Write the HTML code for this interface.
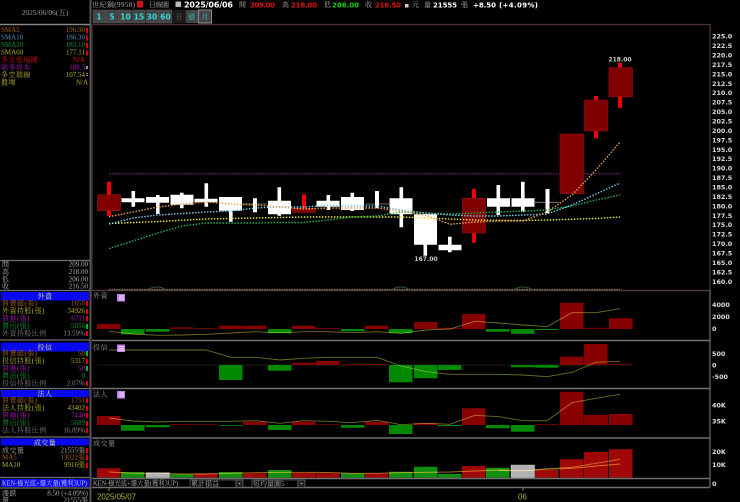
<!DOCTYPE html>
<html><head><meta charset="utf-8"><style>
html,body{margin:0;padding:0;background:#000;width:740px;height:502px;overflow:hidden}
svg{display:block;filter:blur(.3px)}
text{font-family:"Liberation Serif","Noto Serif CJK TC",serif;font-size:7px;fill:#aaa}
.e{text-anchor:end}.m{text-anchor:middle}
.t{letter-spacing:.45px}
.b{font-family:"DejaVu Sans",sans-serif;font-weight:bold;font-size:7px;fill:#fff}
.s{font-family:"DejaVu Sans",sans-serif;font-weight:bold;font-size:6.4px;fill:#ddd}
.w{font-family:"DejaVu Sans",sans-serif;font-weight:bold;font-size:6px;fill:#ccc}
.btn{font-family:"DejaVu Sans",sans-serif;font-weight:bold;font-size:7.5px;fill:#30d8d8;text-anchor:middle}
.l{fill:none;stroke:#6e6e22;stroke-width:.9;mix-blend-mode:screen}
.d{fill:none;stroke-width:1.4;stroke-dasharray:1.5 1.5}
</style></head><body>
<svg width="740" height="502" viewBox="0 0 740 502" xmlns="http://www.w3.org/2000/svg">
<rect width="740" height="502" fill="#000"/>

<!-- frame -->
<path d="M90.500 0V502" stroke="#5a5058" stroke-width="2"/>
<path d="M0 24.500H90" stroke="#888" stroke-width="1.500"/>
<path d="M92 24.500H710V487" fill="none" stroke="#4a303c" stroke-width="1.300"/>
<path d="M92 24V290" stroke="#3a2a36" stroke-width="1.500"/>
<path d="M92 290.500H710" stroke="#4a3a3c" stroke-width="1.500"/>
<path d="M92 340.500H710M92 388.500H710M92 438H710M92 487.500H710" stroke="#707070" stroke-width="1.400"/>
<path d="M710 290V487" stroke="#707070" stroke-width="1"/>
<path d="M0 260.500H90M0 290.500H90M0 340H90M0 388.500H90M0 437H90M0 477.500H90M0 488H90" stroke="#707070" stroke-width="1.300"/>

<!-- left top -->
<text x="45" y="15" class="m" style="font-size:7.500px;fill:#999">2025/06/06(五)</text>
<text x="1" y="32" style="fill:#a86018">SMA5</text><text x="85" y="32" class="e" style="fill:#a86018">196.90</text>
<text x="1" y="39.500" style="fill:#5090b8">SMA10</text><text x="85" y="39.500" class="e" style="fill:#5090b8">186.30</text>
<text x="1" y="47" style="fill:#109038">SMA20</text><text x="85" y="47" class="e" style="fill:#109038">183.10</text>
<text x="1" y="54.500" style="fill:#b0b028">SMA60</text><text x="85" y="54.500" class="e" style="fill:#b0b028">177.11</text>
<text x="1" y="62" class="t" style="fill:#d01010">多方逃場圖</text><text x="85" y="62" class="e" style="fill:#d01010">N/A</text>
<text x="1" y="69.500" class="t" style="fill:#a818b8">做多成本</text><text x="85" y="69.500" class="e" style="fill:#a818b8">188.5</text>
<text x="1" y="77" class="t" style="fill:#b0b028">多空瑞線</text><text x="85" y="77" class="e" style="fill:#b0b028">107.54</text>
<text x="1" y="84.500" class="t" style="fill:#b0b028">盤場</text><text x="88" y="84.500" class="e" style="fill:#b0b028">N/A</text>
<path d="M86 28h2v5h-2zM86 35.500h2v5h-2zM86 43h2v5h-2zM86 50.500h2v5h-2z" fill="#e00000"/>
<path d="M86 66h2v3h-2zM86 73h2v1h-2zM86 75h2v1h-2z" fill="#999"/>

<!-- OHLC -->
<text x="2" y="266.500" style="fill:#aaa">開</text><text x="88" y="266.500" class="e" style="fill:#aaa">209.00</text>
<text x="2" y="274" style="fill:#aaa">高</text><text x="88" y="274" class="e" style="fill:#aaa">218.00</text>
<text x="2" y="281.500" style="fill:#aaa">低</text><text x="88" y="281.500" class="e" style="fill:#aaa">206.00</text>
<text x="2" y="288.500" style="fill:#aaa">收</text><text x="88" y="288.500" class="e" style="fill:#aaa">216.50</text>

<!-- side blocks -->
<path d="M1 292h88v8.500H1zM1 342.500h88v9H1zM1 390h88v7H1zM1 438.500h88v7H1zM1 479h88v8H1z" fill="#0808f0"/>
<text x="45" y="298.500" class="m t" style="fill:#e0e090">外資</text>
<text x="45" y="349.500" class="m t" style="fill:#e0e090">投信</text>
<text x="45" y="396" class="m t" style="fill:#e0e090">法人</text>
<text x="45" y="445" class="m t" style="fill:#e0e090">成交量</text>
<text x="2" y="485.500" style="fill:#c8c8ff" textLength="85" lengthAdjust="spacingAndGlyphs">KEN-極光底+爆大量(獲利3UP)</text>

<text x="2" y="305.500" class="t" style="fill:#a86018">買賣超(張)</text><text x="85" y="305.500" class="e" style="fill:#a86018">1655</text>
<text x="2" y="313" class="t" style="fill:#b0b028">外資持股(張)</text><text x="85" y="313" class="e" style="fill:#b0b028">34926</text>
<text x="2" y="320.500" class="t" style="fill:#a818b8">買進(張)</text><text x="85" y="320.500" class="e" style="fill:#a818b8">6711</text>
<text x="2" y="328" class="t" style="fill:#109038">賣出(張)</text><text x="85" y="328" class="e" style="fill:#109038">5056</text>
<text x="2" y="335.500" class="t" style="fill:#777">外資持股比例</text><text x="85" y="335.500" class="e" style="fill:#888">13.59%</text>

<text x="2" y="355.500" class="t" style="fill:#a86018">買賣超(張)</text><text x="85" y="355.500" class="e" style="fill:#a86018">50</text>
<text x="2" y="363" class="t" style="fill:#b0b028">投信持股(張)</text><text x="85" y="363" class="e" style="fill:#b0b028">5317</text>
<text x="2" y="370.500" class="t" style="fill:#a818b8">買進(張)</text><text x="85" y="370.500" class="e" style="fill:#a818b8">50</text>
<text x="2" y="378" class="t" style="fill:#109038">賣出(張)</text><text x="85" y="378" class="e" style="fill:#109038">0</text>
<text x="2" y="385.500" class="t" style="fill:#777">投信持股比例</text><text x="85" y="385.500" class="e" style="fill:#888">2.07%</text>

<text x="2" y="402.500" class="t" style="fill:#a86018">買賣超(張)</text><text x="85" y="402.500" class="e" style="fill:#a86018">1751</text>
<text x="2" y="410" class="t" style="fill:#b0b028">法人持股(張)</text><text x="85" y="410" class="e" style="fill:#b0b028">43402</text>
<text x="2" y="417.500" class="t" style="fill:#a818b8">買進(張)</text><text x="85" y="417.500" class="e" style="fill:#a818b8">7440</text>
<text x="2" y="425" class="t" style="fill:#109038">賣出(張)</text><text x="85" y="425" class="e" style="fill:#109038">5689</text>
<text x="2" y="432.500" class="t" style="fill:#777">法人持股比例</text><text x="85" y="432.500" class="e" style="fill:#888">16.89%</text>

<text x="2" y="452.500" class="t" style="fill:#aaa">成交量</text><text x="85" y="452.500" class="e" style="fill:#aaa">21555張</text>
<text x="2" y="459.500" style="fill:#a86018">MA5</text><text x="85" y="459.500" class="e" style="fill:#a86018">13022張</text>
<text x="2" y="467" style="fill:#b0b028">MA10</text><text x="85" y="467" class="e" style="fill:#b0b028">9916張</text>

<text x="2" y="495.500" class="t" style="fill:#aaa">漲跌</text><text x="88" y="495.500" class="e" style="fill:#aaa">8.50 (+4.09%)</text>
<text x="2" y="502.500" style="fill:#aaa">量</text><text x="88" y="502.500" class="e" style="fill:#aaa">21555張</text>

<path d="M86 301h2v5h-2zM86 309h2v5h-2zM86 316h2v5h-2zM86 331h2v5h-2zM86 359h2v5h-2zM86 381h2v5h-2zM86 398h2v5h-2zM86 406h2v5h-2zM86 413h2v5h-2zM86 421h2v5h-2zM86 428h2v5h-2zM86 448h2v5h-2zM86 455h2v5h-2zM86 463h2v5h-2z" fill="#e00000"/>
<path d="M86 324h2v5h-2zM86 351h2v5h-2zM86 366h2v5h-2z" fill="#00c000"/>

<!-- header -->
<text x="92" y="7" style="fill:#aaa" textLength="43">世紀鋼(9958)</text>
<rect x="137" y="1" width="6" height="6.500" fill="#d01018"/>
<text x="149" y="7" style="fill:#aaa" textLength="20">日線圖</text>
<rect x="175.500" y="1.500" width="5.500" height="5.500" fill="#bbb"/>
<text x="184" y="7.500" class="b" style="font-size:8px" textLength="49">2025/06/06</text>
<text x="239" y="7" style="fill:#aaa">開</text>
<text x="250" y="7.500" class="b" style="fill:#e01010" textLength="25">209.00</text>
<text x="282" y="7" style="fill:#aaa">高</text>
<text x="291" y="7.500" class="b" style="fill:#e01010" textLength="26">218.00</text>
<text x="324" y="7" style="fill:#aaa">低</text>
<text x="332" y="7.500" class="b" style="fill:#10d010" textLength="27">206.00</text>
<text x="365" y="7" style="fill:#aaa">收</text>
<text x="375" y="7.500" class="b" style="fill:#e01010" textLength="26">216.50</text>
<rect x="405" y="4" width="3.500" height="3.500" fill="#ccc"/>
<text x="412" y="7" style="fill:#aaa">元</text>
<text x="424" y="7" style="fill:#aaa">量</text>
<text x="433" y="7.500" class="b" textLength="24">21555</text>
<text x="461" y="7" style="fill:#aaa">張</text>
<text x="473" y="7.500" class="b" textLength="23">+8.50</text>
<text x="499" y="7.500" class="b" textLength="39">(+4.09%)</text>

<!-- buttons -->
<path d="M93 10h12.500v13H93zM106 10h12.500v13H106zM119 10h12.500v13H119zM132.500 10h12.500v13H132.500zM146 10h12.500v13H146zM159 10h13v13H159z" fill="#444" stroke="#5c5c5c" stroke-width=".5"/>
<rect x="173" y="10" width="12" height="13" fill="#1a1a1a"/>
<rect x="185.500" y="10" width="12.500" height="13" fill="#444"/>
<rect x="198.500" y="10" width="13" height="13" fill="#444" stroke="#aaa" stroke-width=".8"/>
<text x="99" y="19.500" class="btn">1</text><text x="112" y="19.500" class="btn">5</text><text x="125.500" y="19.500" class="btn">10</text><text x="139" y="19.500" class="btn">15</text><text x="152" y="19.500" class="btn">30</text><text x="165.500" y="19.500" class="btn">60</text>
<text x="179" y="19" class="m" style="fill:#666">日</text><text x="191.500" y="19" class="m" style="fill:#30c0c0">週</text><text x="205" y="19" class="m" style="fill:#30c0c0">月</text>

<!-- price scale -->
<text class="s" x="712" y="38.500">225.0</text><text class="s" x="712" y="48">222.5</text><text class="s" x="712" y="57.500">220.0</text><text class="s" x="712" y="67">217.5</text><text class="s" x="712" y="76.500">215.0</text><text class="s" x="712" y="86">212.5</text><text class="s" x="712" y="95">210.0</text><text class="s" x="712" y="104.500">207.5</text><text class="s" x="712" y="114">205.0</text><text class="s" x="712" y="123.500">202.5</text><text class="s" x="712" y="133">200.0</text><text class="s" x="712" y="142.500">197.5</text><text class="s" x="712" y="152">195.0</text><text class="s" x="712" y="161">192.5</text><text class="s" x="712" y="170.500">190.0</text><text class="s" x="712" y="180">187.5</text><text class="s" x="712" y="189.500">185.0</text><text class="s" x="712" y="199">182.5</text><text class="s" x="712" y="208.500">180.0</text><text class="s" x="712" y="218">177.5</text><text class="s" x="712" y="227">175.0</text><text class="s" x="712" y="236.500">172.5</text><text class="s" x="712" y="246">170.0</text><text class="s" x="712" y="255.500">167.5</text><text class="s" x="712" y="265">165.0</text><text class="s" x="712" y="274.500">162.5</text><text class="s" x="712" y="284">160.0</text>
<text class="s" x="712" y="307">4000</text><text class="s" x="712" y="319">2000</text><text class="s" x="712" y="331">0</text>
<text class="s" x="712" y="356">500</text><text class="s" x="712" y="367.500">0</text><text class="s" x="712" y="379">-500</text>
<text class="s" x="712" y="407.500">40K</text><text class="s" x="712" y="423.500">35K</text>
<text class="s" x="712" y="454">20K</text><text class="s" x="712" y="467">10K</text><text class="s" x="712" y="486">0</text>

<!-- purple line -->
<path d="M109 173.700H620" stroke="#501858" stroke-width="1.400" stroke-dasharray="2 1"/>
<path d="M109 289.500H620" stroke="#8a7a58" stroke-width="1.200" stroke-dasharray="1.500 1"/>
<path d="M148 289.500q9-5 18 0M392 289.500q9-5 18 0M514 289.500q9-5 18 0" fill="none" stroke="#2c5a2c" stroke-width="1"/>

<!-- thin candle lines -->
<path d="M243 204H267M365 204H389M535 202.300H559" stroke="#888" stroke-width=".8"/>

<!-- wicks red -->
<path d="M107 181.700h4V216h-4zM302 194.300h4V208.300h-4zM472 189h4V242.700h-4zM594 96h4V138.300h-4zM618 62.700h4V107.700h-4z" fill="#f00000"/>
<!-- wicks white -->
<path d="M131.500 191h3.600V206.700h-3.600zM156 195h3.600V214h-3.600zM180 192.700h3.600V208.300h-3.600zM204.500 183.300h3.600V206.700h-3.600zM229 197h3.600V221.700h-3.600zM253 198.300h4V212.300h-4zM277.500 187.300h3.600V215.700h-3.600zM326.500 195h3.600V210h-3.600zM350.500 192.700h3.600V211h-3.600zM375 191h4V208.300h-4zM399.500 187.300h3.600V227.300h-3.600zM423.500 214h3.600V255.700h-3.600zM448 236.700h3.600V252.300h-3.600zM496.500 185h3.600V215h-3.600zM521 181.700h3.600V211.700h-3.600zM545.500 189h4V213.300h-4z" fill="#fff"/>
<!-- white bodies -->
<path d="M121.500 198.300h23V202.300h-23zM146 197h23V202.700h-23zM170.500 194.700h23V204.700h-23zM194.500 198.700h23V202.300h-23zM219 197h23V210.700h-23zM268 200.700h23V214.300h-23zM316.500 200.700h23V206.700h-23zM341 197h23V210h-23zM389.500 198.300h23V214.300h-23zM414 214.300h23V244.700h-23zM438.500 244.700h23V250.300h-23zM487 198.300h23V206.700h-23zM511.500 198.300h23V206.700h-23z" fill="#fff"/>
<!-- red bodies -->
<path d="M97.500 194.700h23V210.700h-23zM292.500 208.300h23V212.300h-23zM462.500 198.300h23V233h-23zM560 134h23.500V193.700h-23.500zM584.500 100h23V131h-23zM609 67.700h23.500V96.700h-23.500z" fill="#800000" stroke="#a01010" stroke-width=".6"/>

<!-- MAs -->
<polyline class="d" stroke="#e8e840" points="109,223.500 158,221.500 206,219 255,218 304,217 352,217 401,217 450,219 474,220 523,220.500 547,220 596,218.500 620,217"/>
<polyline class="d" stroke="#20b050" points="109,248.500 133,241 158,233 182,226 206,223 231,223 255,223 280,222.500 304,222.500 328,220 352,217 377,216 401,212 425,213 450,214 474,213 498,212 523,211 547,210 572,206 596,200 620,195"/>
<polyline class="d" stroke="#78c8e8" points="109,224 133,218 158,215 182,213.500 206,212 231,211 255,208 280,207 304,207 328,205.500 352,206 377,206 401,210 425,213 450,215 474,216 498,216 523,215 547,214 572,205 596,194 620,183"/>
<polyline class="d" stroke="#e8a050" points="109,216.700 133,212 158,207 182,204 206,202 231,204 255,205 280,207 304,209 328,208 352,208 377,208 401,211 425,215 450,224.300 474,222 498,221 523,221 547,212 572,195 596,170 620,142"/>

<text x="620" y="61.500" class="w m">218.00</text>
<text x="426" y="261" class="w m">167.00</text>

<!-- sub labels -->
<text x="93" y="298" style="fill:#999;letter-spacing:.5px">外資</text>
<text x="93" y="349.500" style="fill:#999;letter-spacing:.5px">投信</text>
<text x="93" y="396.500" style="fill:#999;letter-spacing:.5px">法人</text>
<text x="93" y="445.500" style="fill:#999;letter-spacing:.5px">成交量</text>
<rect x="117" y="294" width="8" height="7.500" fill="#c080f0"/><rect x="117" y="344.500" width="8" height="7.500" fill="#c080f0"/><rect x="117" y="391" width="8" height="7.500" fill="#c080f0"/>
<path d="M119 295.500h5v1h-5zM119 297.500h5v1h-5zM119 299.500h5v.8h-5zM119 346h5v1h-5zM119 348h5v1h-5zM119 350h5v.8h-5zM119 392.500h5v1h-5zM119 394.500h5v1h-5zM119 396.500h5v.8h-5z" fill="#f0e0ff"/>

<!-- zero line -->
<path d="M97 365H632" stroke="#1c1c1c" stroke-width="1"/>

<!-- foreign bars -->
<path d="M97 324h23.500V329H97zM219 325.700h23.500V329H219zM243 325.700h23.500V329H243zM292 325.700h23.500V329H292zM365 325.700h23.500V329H365zM414 322h23.500V329H414zM462 314h23.500V329H462zM560 302.700h23.500V329H560zM609 318.300h23.500V329H609z" fill="#880000"/>
<path d="M170 327.300h23.500V329H170zM194 328h23.500V329H194zM316 328h23.500V329H316zM438 327.700h23.500V329H438zM584 327.700h24V329H584z" fill="#700000"/>
<path d="M121 329h23.500V334.300H121zM146 329h23.500V331.700H146zM268 329h23.500V333.300H268zM341 329h23.500V331.300H341zM389 329h23.500V333.300H389zM486 329h23.500V331.700H486zM511 329h23.500V333.700H511zM535 329h23.500V330H535z" fill="#008800"/>
<polyline class="l" points="109,331.300 133,334 158,335.300 182,335 206,334.300 231,333 255,331.700 280,332.700 304,331.700 328,331.700 352,332.700 377,331.700 401,333.300 426,330 450,329 475,321.300 499,323 523,325 547,326.700 572,312.700 596,312.700 620,308.700"/>

<!-- trust bars -->
<path d="M219 365h23.500V380H219zM268 365h23.500V370.700H268zM389 365h23.500V382.300H389zM414 365h23.500V378.300H414zM438 365h23.500V370H438zM511 365h23.500V367.300H511zM535 365h23.500V367.700H535z" fill="#008800"/>
<path d="M292 362.700h23.500V365H292zM316 361h23.500V365H316zM560 356.700h23.500V365H560zM584 344h23.500V365H584z" fill="#880000"/>
<path d="M341 364h23.500V365H341zM365 364h23V365H365zM609 364h23.500V365H609z" fill="#700000"/>
<polyline class="l" points="109,350 206,350 231,357.300 255,357.300 280,360 304,358.300 328,357.300 352,357.300 377,357.300 401,366 426,371.700 450,374.300 474,374.300 499,374.300 523,375 547,376.700 572,372.300 596,362.300 620,361.300"/>

<!-- inst bars -->
<path d="M97 416h23.500V425H97zM243 421.700h23.500V425H243zM292 421.700h23.500V425H292zM365 421.700h23.500V425H365zM414 423h23.500V425H414zM462 408.300h23.500V425H462zM560 391.700h23.500V425H560zM584 415h24V425H584zM609 414h23.500V425H609z" fill="#880000"/>
<path d="M170 424h23.500V425H170zM194 424.300h23.500V425H194zM316 424.300h23.500V425H316zM535 424h23.500V425H535z" fill="#700000"/>
<path d="M121 425h23.500V430.700H121zM146 425h23.500V427.300H146zM219 425h23.500V425.700H219zM268 425h23.500V430H268zM341 425h23.500V427.700H341zM389 425h23.500V434H389zM438 425h23.500V426H438zM486 425h23.500V428.300H486zM511 425h23.500V431.700H511z" fill="#008800"/>
<polyline class="l" points="109,418 133,421 158,422 182,421.300 206,421.300 231,421.300 255,420.700 280,423.300 304,420.700 328,421.300 352,422.700 377,420.300 401,424.700 426,423.300 450,424.300 475,415.300 499,416.700 523,420.700 547,420.700 572,402.700 596,398.300 620,394.300"/>

<!-- volume bars -->
<path d="M97 468.300h23.500V477.700H97zM194 473.300h23.500V477.700H194zM243 473.300h23.500V477.700H243zM292 472.700h23.500V477.700H292zM316 473.300h23.500V477.700H316zM365 473.300h23.500V477.700H365zM462 466h23.500V477.700H462zM535 470h23.500V477.700H535zM560 459.300h23.500V477.700H560zM584 452h24V477.700H584zM609 449.300h23.500V477.700H609z" fill="#a00808"/>
<path d="M121 472h23.500V477.700H121zM170 474.300h23.500V477.700H170zM219 472h23.500V477.700H219zM268 470h23.500V477.700H268zM341 473.300h23.500V477.700H341zM389 471.700h23.500V477.700H389zM414 466.700h23.500V477.700H414zM438 474h23.500V477.700H438zM486 467.700h23.500V477.700H486z" fill="#128e10"/>
<path d="M146 472.700h23.500V477.700H146zM511 465h23.500V477.700H511z" fill="#b0b0b0" stroke="#ddd" stroke-width=".4"/>
<polyline points="109,472 133,473.300 158,473.300 182,474 206,474 231,473.300 255,472.700 280,472.300 304,472.300 328,472.500 352,473.300 377,473.300 401,472.700 426,472.300 450,472 475,471 499,470 523,470.700 547,469.300 572,468.300 596,466 620,464" style="fill:none;stroke:#a86a18;stroke-width:.9;mix-blend-mode:screen"/>
<polyline points="499,470.500 523,471 547,468.700 572,467.300 596,463.300 620,459.300" style="fill:none;stroke:#8a6a20;stroke-width:.9;mix-blend-mode:screen"/>

<path d="M92 478.500H710" stroke="#707070" stroke-width="1.400"/>

<!-- bottom strip -->
<text x="93" y="485.500" style="fill:#aaa" textLength="85" lengthAdjust="spacingAndGlyphs">KEN-極光底+爆大量(獲利3UP)</text>
<rect x="190" y="480" width="46" height="7.500" fill="#000" stroke="#777" stroke-width=".6"/>
<rect x="236" y="480" width="7" height="7.500" fill="#222" stroke="#777" stroke-width=".6"/>
<rect x="252" y="480" width="46" height="7.500" fill="#000" stroke="#777" stroke-width=".6"/>
<rect x="298" y="480" width="7" height="7.500" fill="#222" stroke="#777" stroke-width=".6"/>
<text x="191" y="486" style="fill:#aaa">累計損益</text>
<text x="253" y="486" style="fill:#aaa">短均量圖5</text>
<path d="M238.500 483h2l-1 1.500zM300.500 483h2l-1 1.500z" fill="#ccc"/>

<!-- date axis -->
<path d="M109 488V491M523 488V491" stroke="#a0a040" stroke-width=".8"/>
<text x="97" y="499.500" style="font-family:'Liberation Sans',sans-serif;font-size:8px;fill:#b0b030" textLength="39">2025/05/07</text>
<text x="522.500" y="499.500" class="m" style="font-family:'Liberation Sans',sans-serif;font-size:8px;fill:#b0b030">06</text>
</svg>
</body></html>
